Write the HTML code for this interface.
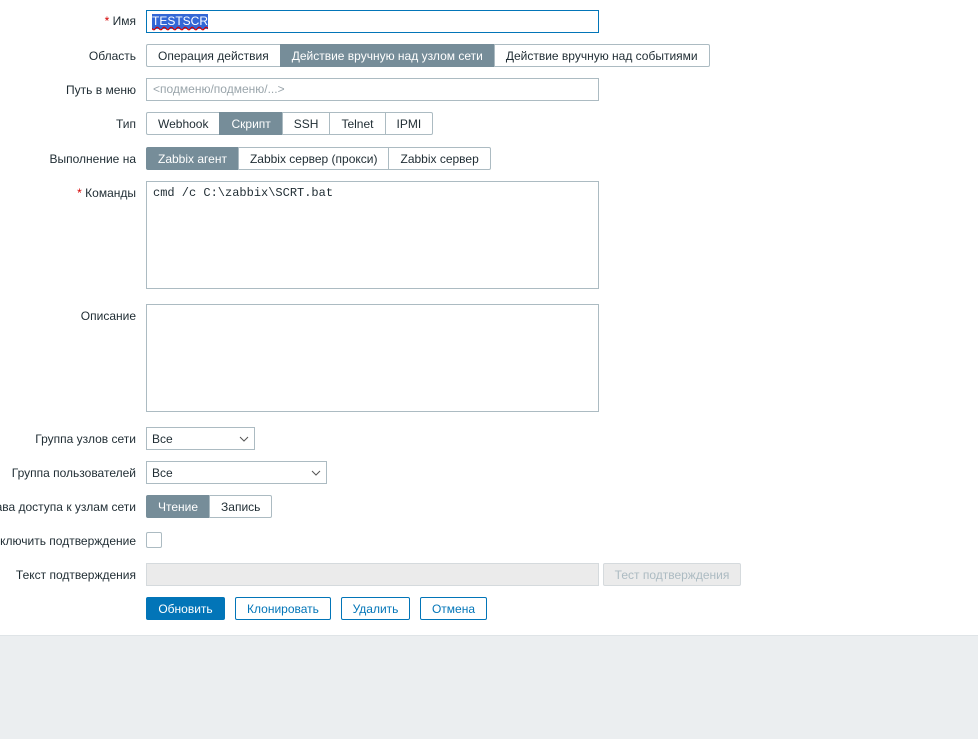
<!DOCTYPE html>
<html><head><meta charset="utf-8"><style>
body{margin:0;width:978px;height:738px;background:#fff;font-family:"Liberation Sans",Arial,sans-serif;font-size:12px;color:#1f2c33;position:relative;overflow:hidden}
.l{position:absolute;right:842px;white-space:nowrap;text-align:right}
.l i{color:#d40000;font-style:normal}
.b{position:absolute;box-sizing:border-box;border:1px solid #acbbc2;background:#fff}
.seg{position:absolute;display:flex;height:23px}
.seg span{box-sizing:border-box;border:1px solid #acbbc2;margin-left:-1px;padding:0 11px;line-height:22px;background:#fff;white-space:nowrap}
.seg span:first-child{margin-left:0;border-radius:2px 0 0 2px}
.seg span:last-child{border-radius:0 2px 2px 0}
.seg span.a{background:#768d99;border-color:#768d99;color:#fff}
.btn{position:absolute;box-sizing:border-box;height:23px;line-height:22px;text-align:center;border:1px solid #0275b8;color:#0275b8;border-radius:2px;background:#fff}
.sel{position:absolute;box-sizing:border-box;border:1px solid #acbbc2;height:23px;line-height:22px;padding-left:5px;background:#fff}
.sel svg{position:absolute;right:5px;top:8px}
</style></head><body>
<div class="l" style="top:14px"><i>* </i>Имя</div>
<div class="b" style="left:146px;top:10px;width:453px;height:23px;border-color:#0275b8"><span style="position:absolute;left:5px;top:3px;background:#3367d6;color:#fff;line-height:15px;text-decoration:underline wavy #d40000">TESTSCR</span></div>
<div class="l" style="top:49px">Область</div>
<div class="seg" style="left:146px;top:44px"><span>Операция действия</span><span class="a">Действие вручную над узлом сети</span><span>Действие вручную над событиями</span></div>
<div class="l" style="top:83px">Путь в меню</div>
<div class="b" style="left:146px;top:78px;width:453px;height:23px;color:#9aa5ab;padding-left:6px;line-height:21px">&lt;подменю/подменю/...&gt;</div>
<div class="l" style="top:117px">Тип</div>
<div class="seg" style="left:146px;top:112px"><span>Webhook</span><span class="a">Скрипт</span><span>SSH</span><span>Telnet</span><span>IPMI</span></div>
<div class="l" style="top:152px">Выполнение на</div>
<div class="seg" style="left:146px;top:147px"><span class="a">Zabbix агент</span><span>Zabbix сервер (прокси)</span><span>Zabbix сервер</span></div>
<div class="l" style="top:186px"><i>* </i>Команды</div>
<div class="b" style="left:146px;top:181px;width:453px;height:108px;font-family:'Liberation Mono',monospace;font-size:12px;padding:4px 6px">cmd /c C:\zabbix\SCRT.bat</div>
<div class="l" style="top:309px">Описание</div>
<div class="b" style="left:146px;top:304px;width:453px;height:108px"></div>
<div class="l" style="top:432px">Группа узлов сети</div>
<div class="sel" style="left:146px;top:427px;width:109px">Все<svg width="10" height="6"><path d="M1 1l4 4 4-4" stroke="#555" fill="none"/></svg></div>
<div class="l" style="top:466px">Группа пользователей</div>
<div class="sel" style="left:146px;top:461px;width:181px">Все<svg width="10" height="6"><path d="M1 1l4 4 4-4" stroke="#555" fill="none"/></svg></div>
<div class="l" style="top:500px">Права доступа к узлам сети</div>
<div class="seg" style="left:146px;top:495px"><span class="a">Чтение</span><span>Запись</span></div>
<div class="l" style="top:534px">Включить подтверждение</div>
<div class="b" style="left:146px;top:532px;width:16px;height:16px;border-radius:2px"></div>
<div class="l" style="top:568px">Текст подтверждения</div>
<div class="b" style="left:146px;top:563px;width:453px;height:23px;background:#ebebeb;border-color:#d5dadd"></div>
<div class="btn" style="left:603px;top:563px;width:138px;border-color:#d5dadd;color:#acbbc2;background:#ebebeb">Тест подтверждения</div>
<div class="btn" style="left:146px;top:597px;width:79px;background:#0275b8;color:#fff">Обновить</div>
<div class="btn" style="left:235px;top:597px;width:96px">Клонировать</div>
<div class="btn" style="left:341px;top:597px;width:69px">Удалить</div>
<div class="btn" style="left:420px;top:597px;width:67px">Отмена</div>
<div style="position:absolute;left:0;top:635px;width:978px;height:103px;background:#ebeef0;border-top:1px solid #dfe4e7"></div>
</body></html>
